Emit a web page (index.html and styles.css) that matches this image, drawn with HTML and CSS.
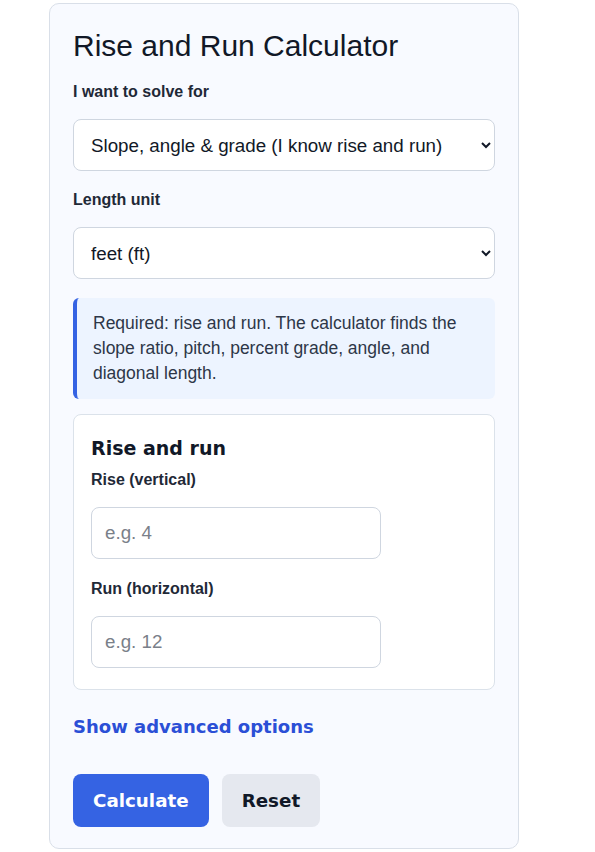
FILE: index.html
```html
<!DOCTYPE html>
<html lang="en">
<head>
    <meta charset="UTF-8">
    <meta name="viewport" content="width=device-width, initial-scale=1.0">
    <title>Rise and Run Calculator</title>
    <link rel="stylesheet" href="styles.css">
</head>
<body>
    <div class="calculator">
        <h1>Rise and Run Calculator</h1>

        <div class="field">
            <label for="mode">I want to solve for</label>
            <select id="mode">
                <option>Slope, angle &amp; grade (I know rise and run)</option>
                <option>Run (I know rise and slope)</option>
                <option>Rise (I know run and slope)</option>
            </select>
        </div>

        <div class="field">
            <label for="unit">Length unit</label>
            <select id="unit">
                <option>feet (ft)</option>
                <option>inches (in)</option>
                <option>meters (m)</option>
            </select>
        </div>

        <div class="note">
            Required: rise and run. The calculator finds the slope ratio, pitch, percent grade, angle, and diagonal length.
        </div>

        <div class="group">
            <h2>Rise and run</h2>
            <div class="field">
                <label for="rise">Rise (vertical)</label>
                <input type="text" id="rise" placeholder="e.g. 4">
            </div>
            <div class="field">
                <label for="run">Run (horizontal)</label>
                <input type="text" id="run" placeholder="e.g. 12">
            </div>
        </div>

        <a href="#" class="advanced-link">Show advanced options</a>

        <div class="actions">
            <button class="btn btn-primary">Calculate</button>
            <button class="btn btn-secondary">Reset</button>
        </div>
    </div>
</body>
</html>
```

FILE: styles.css
```css
* {
    margin: 0;
    padding: 0;
    box-sizing: border-box;
}

body {
    font-family: 'Liberation Sans', Arial, sans-serif;
    background: #ffffff;
    color: #1f2937;
}

.calculator {
    width: 470px;
    margin: 3px 0 0 49px;
    padding: 24px 23px 21px;
    background: #f8faff;
    border: 1px solid #d9dfe8;
    border-radius: 10px;
}

.calculator h1 {
    font-size: 30px;
    font-weight: normal;
    color: #111827;
    line-height: 36px;
    margin-bottom: 18px;
}

.field {
    margin-bottom: 19px;
}

.field label {
    display: block;
    font-size: 16px;
    font-weight: bold;
    color: #1f2937;
    line-height: 20px;
    margin-bottom: 17px;
}

select,
input {
    font-family: inherit;
    font-size: 18.75px;
    color: #111827;
    background: #ffffff;
    border: 1px solid #cfd6e0;
    border-radius: 8px;
    height: 52px;
}

select {
    width: 100%;
    padding: 0 14px 0 13px;
}

input {
    width: 290px;
    padding: 0 13px;
}

input::placeholder {
    color: #7a8089;
}

.note {
    background: #edf4ff;
    border-left: 4px solid #3563e3;
    border-radius: 6px;
    margin-top: 1px;
    padding: 13px 16px;
    font-size: 17.5px;
    line-height: 25px;
    color: #2d3748;
    margin-bottom: 15px;
}

.group {
    background: #ffffff;
    border: 1px solid #dbe2ea;
    border-radius: 8px;
    padding: 21px 17px 1px;
    margin-bottom: 26px;
}

.group h2 {
    font-family: 'DejaVu Sans', sans-serif;
    font-size: 19px;
    font-weight: bold;
    color: #111827;
    line-height: 24px;
    margin-bottom: 10px;
}

.group .field {
    margin-bottom: 20px;
}

.advanced-link {
    display: block;
    font-family: 'DejaVu Sans', sans-serif;
    font-size: 18px;
    font-weight: bold;
    color: #2b4fd6;
    text-decoration: none;
    line-height: 22px;
    margin-bottom: 36px;
}

.actions {
    display: flex;
    gap: 13px;
}

.btn {
    font-family: 'DejaVu Sans', sans-serif;
    font-size: 18.3px;
    font-weight: bold;
    height: 53px;
    padding: 0 20px;
    border: none;
    border-radius: 8px;
    cursor: pointer;
}

.btn-primary {
    background: #3563e3;
    color: #ffffff;
}

.btn-secondary {
    background: #e5e8ef;
    color: #111827;
}
```
